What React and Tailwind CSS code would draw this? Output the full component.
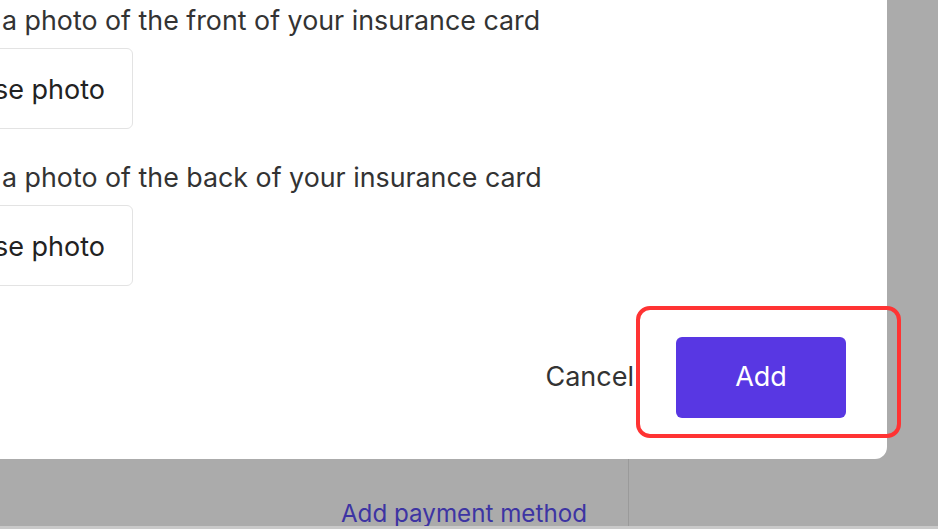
export default function App() {
  return (
    <div className="relative w-[938px] h-[529px] overflow-hidden bg-[#ababab] font-['Inter',sans-serif]">
      {/* page behind the overlay */}
      <div className="flex h-full flex-col">
        <div className="flex flex-1">
          <div className="flex w-[629px] flex-col items-end justify-end border-r border-[#9a9a9a] pr-[41px]">
            <span className="text-[24.2px] leading-[24px] text-[#3d34a3]">Add payment method</span>
          </div>
          <div className="flex-1" />
        </div>
        <div className="h-[3px] bg-[#c9c9c9]" />
      </div>

      {/* modal */}
      <div className="absolute left-[-20px] top-[-20px] flex h-[479px] w-[907px] flex-col rounded-[12px] bg-white pl-[22px] pt-[22px]">
        <p className="whitespace-nowrap text-[26.8px] leading-[36px] text-[#333333]">
          a photo of the front of your insurance card
        </p>
        <div className="mt-[10px] flex w-[131px] justify-end">
          <button className="flex h-[81px] shrink-0 items-center whitespace-nowrap rounded-[6px] border border-[#e3e3e3] bg-white pl-[28px] pr-[27px] pt-[3px] text-[27px] font-normal text-[#222222]">
            Choose photo
          </button>
        </div>
        <p className="mt-[30px] whitespace-nowrap text-[26.8px] leading-[36px] text-[#333333]">
          a photo of the back of your insurance card
        </p>
        <div className="mt-[10px] flex w-[131px] justify-end">
          <button className="flex h-[81px] shrink-0 items-center whitespace-nowrap rounded-[6px] border border-[#e3e3e3] bg-white pl-[28px] pr-[27px] pt-[3px] text-[27px] font-normal text-[#222222]">
            Choose photo
          </button>
        </div>
        <div className="mt-[51px] flex items-center justify-end pr-[41px]">
          <span className="text-[27px] text-[#333333]">Cancel</span>
          <div className="relative ml-[42px] flex h-[81px] w-[170px] items-center justify-center rounded-[6px] bg-[#5837e3] text-[27px] text-white">
            Add
            <div className="pointer-events-none absolute left-[-40px] top-[-31px] h-[132px] w-[265px] rounded-[14px] border-[4px] border-[#ff3333]" />
          </div>
        </div>
      </div>
    </div>
  );
}
